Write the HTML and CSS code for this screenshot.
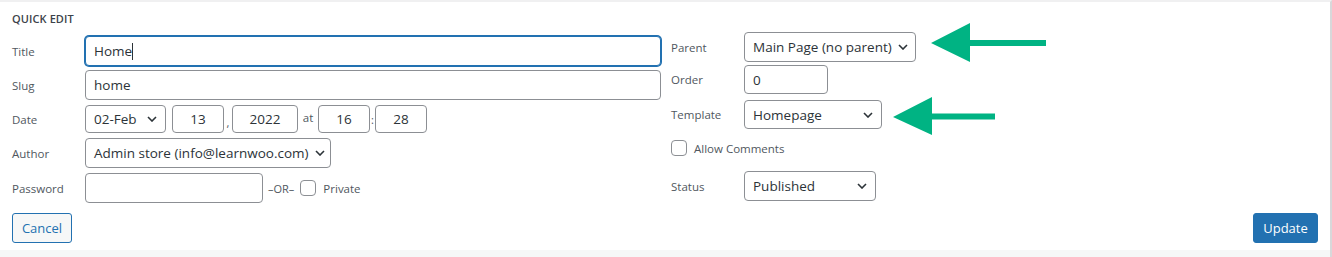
FILE: index.html
```html
<!DOCTYPE html>
<html>
<head>
<meta charset="utf-8">
<link rel="stylesheet" href="styles.css">
</head>
<body>
<div class="page">
  <div class="panel">
    <div class="heading">QUICK EDIT</div>
    <div class="columns">
      <div class="col-left">
        <div class="row row-title">
          <span class="label">Title</span>
          <div class="input wide focus">Home<span class="caret"></span></div>
        </div>
        <div class="row row-slug">
          <span class="label">Slug</span>
          <div class="input wide">home</div>
        </div>
        <div class="row row-date">
          <span class="label">Date</span>
          <div class="select sm date-month"><span>02-Feb</span><svg class="chev" viewBox="0 0 10 6"><path d="M1 1l4 4 4-4"/></svg></div>
          <div class="input sm num w52 ml6">13</div>
          <span class="sep comma">,</span>
          <div class="input sm num w66">2022</div>
          <span class="sep at">at</span>
          <div class="input sm num w52">16</div>
          <span class="sep colon">:</span>
          <div class="input sm num w52">28</div>
        </div>
        <div class="row row-author">
          <span class="label">Author</span>
          <div class="select author"><span>Admin store (info@learnwoo.com)</span><svg class="chev" viewBox="0 0 10 6"><path d="M1 1l4 4 4-4"/></svg></div>
        </div>
        <div class="row row-pass">
          <span class="label">Password</span>
          <div class="input pass"></div>
          <span class="or">–OR–</span>
          <span class="checkbox"></span>
          <span class="check-text">Private</span>
        </div>
      </div>
      <div class="col-right">
        <div class="row r-parent">
          <span class="label">Parent</span>
          <div class="select parent"><span>Main Page (no parent)</span><svg class="chev" viewBox="0 0 10 6"><path d="M1 1l4 4 4-4"/></svg></div>
        </div>
        <div class="row r-order">
          <span class="label">Order</span>
          <div class="input order">0</div>
        </div>
        <div class="row r-template">
          <span class="label">Template</span>
          <div class="select template"><span>Homepage</span><svg class="chev" viewBox="0 0 10 6"><path d="M1 1l4 4 4-4"/></svg></div>
        </div>
        <div class="row r-comments">
          <span class="checkbox"></span>
          <span class="check-text">Allow Comments</span>
        </div>
        <div class="row r-status">
          <span class="label">Status</span>
          <div class="select status"><span>Published</span><svg class="chev" viewBox="0 0 10 6"><path d="M1 1l4 4 4-4"/></svg></div>
        </div>
      </div>
    </div>
    <div class="buttons">
      <div class="btn cancel">Cancel</div>
      <div class="btn update">Update</div>
    </div>
  </div>
  <div class="footer"></div>

  <svg class="arrow arrow-1" width="120" height="42" viewBox="0 0 120 42">
    <path d="M0 20 L39 0 L39 17 L115 17 L115 23 L39 23 L39 39 Z"/>
  </svg>
  <svg class="arrow arrow-2" width="110" height="42" viewBox="0 0 110 42">
    <path d="M0 20 L39 0 L39 16.5 L102 16.5 L102 22.5 L39 22.5 L39 38 Z"/>
  </svg>
</div>
</body>
</html>
```

FILE: styles.css
```css
* { box-sizing: border-box; }
html, body { margin: 0; padding: 0; background: #ffffff; }
body {
  font-family: "Open Sans", "Noto Sans", "Liberation Sans", sans-serif;
  color: #2c3338;
}
.page {
  position: relative;
  width: 1332px;
  height: 257px;
  overflow: hidden;
  background: #ffffff;
}
.panel {
  height: 250px;
  border-top: 2px solid #f0f0f1;
  border-right: 2px solid #d8d8da;
  padding: 0 12px 0 12px;
  display: flex;
  flex-direction: column;
}
.footer {
  height: 7px;
  background: #f6f7f7;
  border-right: 2px solid #d8d8da;
}
.heading {
  padding-top: 10px;
  height: 24px;
  line-height: 14px;
  font-size: 11px;
  font-weight: 600;
  color: #3c434a;
  letter-spacing: 0.1px;
}
.columns {
  margin-top: 6px;
  display: flex;
  gap: 10px;
}
.col-left { width: 649px; display: flex; flex-direction: column; }
.col-right { flex: 1; display: flex; flex-direction: column; }
.row { display: flex; align-items: center; }
.label {
  width: 73px;
  flex: none;
  font-size: 11.5px;
  color: #50575e;
}
.input, .select {
  height: 30px;
  border: 1px solid #8c8f94;
  border-radius: 4px;
  background: #fff;
  font-size: 13.5px;
  color: #2c3338;
  padding: 0 8px;
  display: flex;
  align-items: center;
  white-space: nowrap;
}
.select { justify-content: space-between; padding-right: 8px; }
.chev { width: 10px; height: 6px; flex: none; margin-left: 6px; }
.chev path { fill: none; stroke: #2c3338; stroke-width: 1.6; }
.wide { flex: 1; }
.focus {
  border-color: #2271b1;
  box-shadow: 0 0 0 1px #2271b1;
}
.caret {
  display: inline-block;
  width: 1px;
  height: 17px;
  background: #2c3338;
  margin-left: 0;
}
.row-title { margin-top: 4px; }
.row-slug { margin-top: 4px; }
.row-date { margin-top: 5px; height: 28px; }
.row-date .input, .row-date .select { height: 28px; }
.date-month { width: 81px; }
.num { justify-content: center; padding: 0; }
.w52 { width: 52px; }
.w66 { width: 66px; }
.ml6 { margin-left: 6px; }
.sep { font-size: 11px; color: #50575e; display: flex; justify-content: center; }
.comma { width: 8px; align-self: flex-end; padding-bottom: 3px; }
.at { width: 20px; font-size: 11.5px; padding-bottom: 4px; }
.colon { width: 5px; }
.row-author { margin-top: 5px; }
.author { width: 246px; }
.row-pass { margin-top: 5px; }
.pass { width: 178px; }
.or { font-size: 11px; color: #50575e; margin-left: 5px; }
.checkbox {
  width: 16px;
  height: 16px;
  border: 1px solid #8c8f94;
  border-radius: 4px;
  background: #fff;
  flex: none;
}
.row-pass .checkbox { margin-left: 6px; }
.check-text { font-size: 11.5px; color: #50575e; margin-left: 7px; }

.parent { width: 172px; }
.r-order { margin-top: 3px; }
.order { width: 84px; height: 29px; }
.r-template { margin-top: 6px; }
.template { width: 138px; height: 29px; }
.r-comments { margin-top: 10px; height: 18px; }
.r-comments .check-text { margin-left: 7px; }
.r-status { margin-top: 14px; }
.status { width: 132px; }

.buttons {
  margin-top: 10px;
  display: flex;
  justify-content: space-between;
}
.btn {
  height: 30px;
  border-radius: 3px;
  font-size: 13px;
  display: flex;
  align-items: center;
  justify-content: center;
}
.cancel {
  width: 60px;
  border: 1px solid #2271b1;
  background: #f6f7f7;
  color: #2271b1;
}
.update {
  width: 65px;
  background: #2271b1;
  color: #fff;
  border: 1px solid #2271b1;
  margin-right: 0;
}
.arrow { position: absolute; }
.arrow path { fill: #00b383; }
.arrow-1 { left: 931px; top: 23px; }
.arrow-2 { left: 893px; top: 97px; }
```
